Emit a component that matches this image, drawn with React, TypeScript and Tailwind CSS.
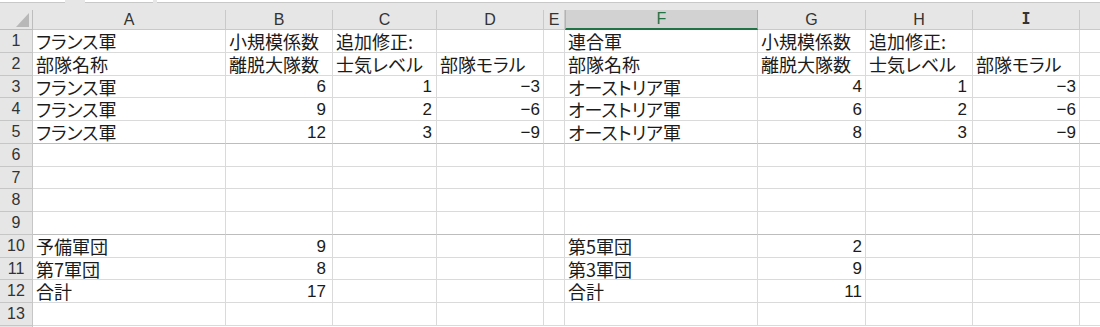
import React from 'react';

type Cell = { v: string; num?: boolean };

const cols = [
  { key: 'A', w: 'w-[193px]', pr: 'pr-[3px]' },
  { key: 'B', w: 'w-[107px]', pr: 'pr-[6px]' },
  { key: 'C', w: 'w-[104px]', pr: 'pr-[4px]' },
  { key: 'D', w: 'w-[107px]', pr: 'pr-[3px]' },
  { key: 'E', w: 'w-[21px]', pr: 'pr-[3px]' },
  { key: 'F', w: 'w-[193px]', pr: 'pr-[3px]' },
  { key: 'G', w: 'w-[108px]', pr: 'pr-[3px]' },
  { key: 'H', w: 'w-[107px]', pr: 'pr-[5px]' },
  { key: 'I', w: 'w-[107px]', pr: 'pr-[3px]' },
];

const heights = [
  'h-[23px]', 'h-[23px]', 'h-[22px]', 'h-[23px]', 'h-[23px]', 'h-[23px]', 'h-[22px]',
  'h-[23px]', 'h-[23px]', 'h-[23px]', 'h-[22px]', 'h-[23px]', 'h-[23px]',
];

const t = (v: string): Cell => ({ v });
const n = (v: string): Cell => ({ v, num: true });
const e: Cell = { v: '' };

// 1 row = A..I
const rows: Cell[][] = [
  [t('フランス軍'), t('小規模係数'), t('追加修正:'), e, e, t('連合軍'), t('小規模係数'), t('追加修正:'), e],
  [t('部隊名称'), t('離脱大隊数'), t('士気レベル'), t('部隊モラル'), e, t('部隊名称'), t('離脱大隊数'), t('士気レベル'), t('部隊モラル')],
  [t('フランス軍'), n('6'), n('1'), n('−3'), e, t('オーストリア軍'), n('4'), n('1'), n('−3')],
  [t('フランス軍'), n('9'), n('2'), n('−6'), e, t('オーストリア軍'), n('6'), n('2'), n('−6')],
  [t('フランス軍'), n('12'), n('3'), n('−9'), e, t('オーストリア軍'), n('8'), n('3'), n('−9')],
  [e, e, e, e, e, e, e, e, e],
  [e, e, e, e, e, e, e, e, e],
  [e, e, e, e, e, e, e, e, e],
  [e, e, e, e, e, e, e, e, e],
  [t('予備軍団'), n('9'), e, e, e, t('第5軍団'), n('2'), e, e],
  [t('第7軍団'), n('8'), e, e, e, t('第3軍団'), n('9'), e, e],
  [t('合計'), n('17'), e, e, e, t('合計'), n('11'), e, e],
  [e, e, e, e, e, e, e, e, e],
];

const font = "font-['Noto_Sans_CJK_JP',sans-serif] [font-feature-settings:'palt']";
const numFont = "font-['Liberation_Sans','Noto_Sans_CJK_JP',sans-serif]";

export default function App() {
  return (
    <div className="w-[1100px] h-[327px] overflow-hidden bg-white text-[#1b1b1b]">
      {/* formula bar edge */}
      <div className="flex h-[3px] bg-[#e6e6e6]">
        <div className="w-[65px] bg-white border-b border-[#c8c8c8]" />
        <div className="w-[20px]" />
        <div className="w-[68px] bg-white border-b border-[#c8c8c8]" />
        <div className="w-[4px]" />
        <div className="flex-1 bg-white border-b border-[#c8c8c8]" />
      </div>
      <div className="h-[7px] bg-[#e6e6e6]" />

      {/* column headers */}
      <div className="flex h-[20px] bg-[#e6e6e6] font-['Liberation_Sans',sans-serif] text-[16px] text-[#333]">
        <div className="relative w-[33px] border-r border-b border-[#bdbdbd]">
          <div className="absolute right-[3px] bottom-[2px] w-0 h-0 border-l-[13px] border-l-transparent border-b-[14px] border-b-[#b8b8b8]" />
        </div>
        {cols.map((c) =>
          c.key === 'F' ? (
            <div key={c.key} className={`${c.w} flex items-center justify-center bg-[#d2d2d2] text-[#217346] border-b-2 border-b-[#217346] border-x border-x-[#9fbfa9] leading-none`}>
              {c.key}
            </div>
          ) : (
            <div key={c.key} className={`${c.w} flex items-center justify-center border-r border-b border-[#c9c9c9] leading-none`}>
              {c.key === 'I' ? <span className="font-['DejaVu_Sans_Mono',monospace] text-[15px] font-bold">I</span> : c.key}
            </div>
          )
        )}
        <div className="flex-1 border-b border-[#c9c9c9]" />
      </div>

      {/* body */}
      {rows.map((r, i) => (
        <div key={i} className={`flex ${heights[i]}`}>
          <div className={`w-[33px] flex items-center justify-center bg-[#e6e6e6] border-r border-b border-[#c6c6c6] ${numFont} text-[16px] text-[#333] leading-none`}>
            {i + 1}
          </div>
          {r.map((c, j) => (
            <div
              key={j}
              className={`${cols[j].w} flex items-center overflow-visible whitespace-nowrap border-r border-b ${i === 4 || i === 8 ? 'border-b-[#bdbdbd]' : 'border-b-[#dadada]'} border-r-[#dadada] leading-none ${
                c.num ? `justify-end ${cols[j].pr} ${numFont} text-[17px]` : `pl-[3px] ${font} text-[18px]`
              }`}
            >
              {c.v}
            </div>
          ))}
          <div className={`flex-1 border-b ${i === 4 || i === 8 ? 'border-b-[#bdbdbd]' : 'border-b-[#dadada]'}`} />
        </div>
      ))}
      <div className="flex h-[10px]">
        <div className="w-[33px] bg-[#e6e6e6] border-r border-[#c6c6c6]" />
      </div>
    </div>
  );
}
